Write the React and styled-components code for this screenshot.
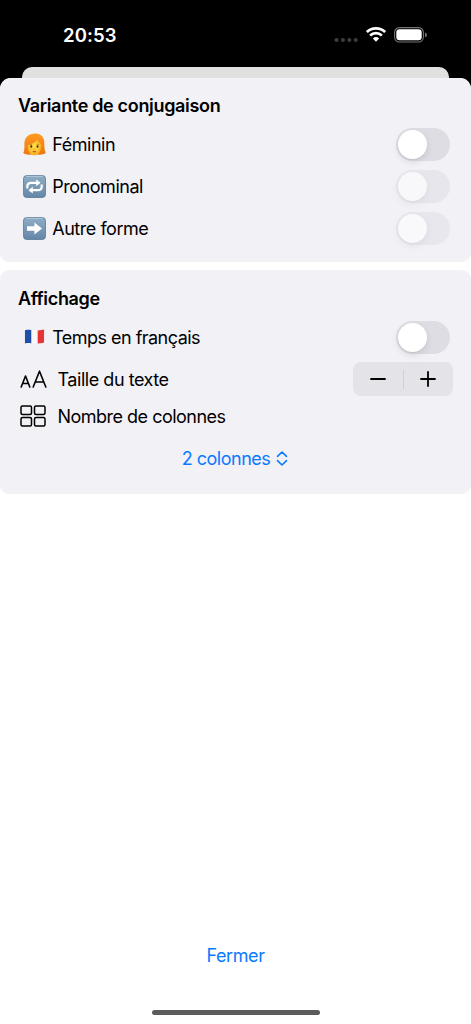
import React, { useState } from "react";
import styled, { createGlobalStyle } from "styled-components";

const GlobalStyle = createGlobalStyle`
  * {
    box-sizing: border-box;
  }

  body {
    margin: 0;
    background: #000;
    font-family: Inter, "Liberation Sans", sans-serif;
    color: #000;
  }
`;

const Screen = styled.div`
  display: flex;
  flex-direction: column;
  width: 100%;
  height: 1024px;
  overflow: hidden;
  background: #000;
`;

const StatusBar = styled.header`
  display: flex;
  align-items: center;
  justify-content: space-between;
  height: 66.5px;
  padding: 3px 44px 0 63px;
  color: #fff;
`;

const Clock = styled.span`
  font-size: 18.5px;
  font-weight: 600;
  line-height: 22px;
  letter-spacing: 0.1px;
`;

const StatusIcons = styled.div`
  display: flex;
  align-items: center;
  gap: 8px;
`;

const BackCard = styled.div`
  flex: none;
  height: 11px;
  margin: 0 22px;
  border-radius: 10px 10px 0 0;
  background: #e0e0e0;
`;

const Sheet = styled.main`
  display: flex;
  flex: 1;
  flex-direction: column;
  gap: 8px;
  border-radius: 11px 11px 0 0;
  background: #fff;
  overflow: hidden;
`;

const Panel = styled.section`
  height: ${({ $height }) => $height}px;
  padding: ${({ $top }) => $top || 17}px 18px 0;
  border-radius: 9px;
  background: #f2f1f6;
`;

const PanelTitle = styled.h2`
  height: 28.5px;
  margin: 0;
  font-size: 18px;
  font-weight: 600;
  line-height: 22px;
  letter-spacing: -0.33px;
`;

const Row = styled.div`
  display: flex;
  align-items: center;
  height: ${({ $height }) => $height || 42}px;
`;

const IconSlot = styled.span`
  display: flex;
  flex: none;
  width: ${({ $wide }) => ($wide ? 39.5 : 34.2)}px;
  padding-left: ${({ $wide }) => ($wide ? 2 : 5)}px;
`;

const Label = styled.span`
  flex: 1;
  padding-top: 2px;
  font-size: 18px;
  line-height: 24px;
  letter-spacing: ${({ $spacing }) => $spacing || -0.46}px;
  white-space: nowrap;
`;

const Track = styled.button`
  flex: none;
  width: 54px;
  height: 33px;
  margin-right: 3px;
  padding: 2px;
  border: none;
  border-radius: 17px;
  background: ${({ $on }) => ($on ? "#34c759" : "#dedde3")};
  opacity: ${({ disabled }) => (disabled ? 0.5 : 1)};
`;

const Thumb = styled.span`
  display: block;
  width: 29px;
  height: 29px;
  margin-left: ${({ $on }) => ($on ? 21 : 0)}px;
  border-radius: 50%;
  background: #fff;
  box-shadow: 0 3px 7px rgba(0, 0, 0, 0.1), 0 1px 1px rgba(0, 0, 0, 0.04);
`;

const StepperBox = styled.div`
  display: flex;
  align-items: center;
  width: 100px;
  height: 34px;
  border-radius: 8px;
  background: #e4e3e8;
`;

const StepButton = styled.button`
  display: flex;
  flex: 1;
  align-items: center;
  justify-content: center;
  height: 100%;
  padding: 0;
  border: none;
  background: none;
`;

const StepDivider = styled.span`
  width: 1px;
  height: 19px;
  background: #d0cfd5;
`;

const Picker = styled.button`
  display: flex;
  align-items: center;
  justify-content: center;
  gap: 6px;
  width: 100%;
  height: 53px;
  padding: 0 1px 0 0;
  border: none;
  background: none;
  color: #0a7aff;
  font-family: inherit;
  font-size: 18px;
  letter-spacing: -0.48px;
`;

const Footer = styled.footer`
  display: flex;
  flex-direction: column;
  align-items: center;
  margin-top: auto;
  padding-bottom: 9px;
`;

const CloseButton = styled.button`
  height: 24px;
  margin-bottom: 42px;
  padding: 0;
  border: none;
  background: none;
  color: #0a7aff;
  font-family: inherit;
  font-size: 18px;
  line-height: 24px;
  letter-spacing: -0.4px;
`;

const HomeIndicator = styled.div`
  width: 168px;
  height: 5px;
  border-radius: 3px;
  background: #5c5c5c;
`;

const SignalDots = () => (
  <svg width="24" height="22" viewBox="0 0 24 22" fill="#3c3c3c">
    <circle cx="2.5" cy="16" r="2.1" />
    <circle cx="8.9" cy="16" r="2.1" />
    <circle cx="15.3" cy="16" r="2.1" />
    <circle cx="21.7" cy="16" r="2.1" />
  </svg>
);

const Wifi = () => (
  <svg width="20" height="15" viewBox="0 0 20 15" fill="none" stroke="#fff">
    <path d="M.9 5.1a13.1 13.1 0 0 1 18.2 0" strokeWidth="2.7" />
    <path d="M4.1 8.5a8.6 8.6 0 0 1 11.8 0" strokeWidth="2.6" />
    <path d="M6.9 11.5a4.6 4.6 0 0 1 6.2 0L10 14.7Z" fill="#fff" stroke="none" />
  </svg>
);

const Battery = () => (
  <svg width="33" height="16" viewBox="0 0 33 16">
    <rect x=".6" y=".6" width="28.8" height="14.4" rx="4.8" fill="none" stroke="#747474" strokeWidth="1.1" />
    <rect x="2.3" y="2.3" width="25.4" height="11" rx="3.2" fill="#fff" />
    <path d="M31 5.5q2 .7 2 2.4T31 10.3Z" fill="#747474" />
  </svg>
);

const Woman = () => (
  <svg width="23" height="23" viewBox="0 0 23 23">
    <defs>
      <linearGradient id="hair" x1="0" y1="0" x2="0" y2="1">
        <stop offset="0" stopColor="#ff9b20" />
        <stop offset="1" stopColor="#ee7413" />
      </linearGradient>
      <radialGradient id="skin" cx=".5" cy=".45" r=".6">
        <stop offset="0" stopColor="#ffe34d" />
        <stop offset="1" stopColor="#f3a91b" />
      </radialGradient>
    </defs>
    <path
      d="M9.500.900C15.500-.9 20.500 2.500 21.200 8c.5 3.900-.4 8.200 1.600 12-2.600 1.700-5.200 1.900-7.800 1.500H8C5.400 21.900 2.600 21.700.2 20 2.200 16.200 1 12.200 1.600 8.200 2.300 4.600 5.200 1.400 9.500.900Z"
      fill="url(#hair)"
    />
    <path d="M4.600 12.200C9 11.200 12.500 9.300 14.400 6.300c.8 2.200 2 3.700 3.800 4.900.3 6.200-2.200 11.100-6.600 11.100S4.300 18 4.600 12.200Z" fill="url(#skin)" />
    <path d="M7 11.900q1-.6 2.100-.2M13.600 11.500q1.200-.7 2.200.1" fill="none" stroke="#a95c12" strokeWidth=".6" />
    <ellipse cx="8.300" cy="13.500" rx=".95" ry="1.200" fill="#4b2b12" />
    <ellipse cx="14.500" cy="13.500" rx=".95" ry="1.200" fill="#4b2b12" />
    <path d="M10.600 16h1.600" stroke="#d98414" strokeWidth=".7" />
    <path d="M9.300 18.400q2.100-.8 4.200 0-2.100 1.700-4.200 0Z" fill="#b6471f" />
  </svg>
);

const Tile = ({ id, children }) => (
  <svg width="23" height="23" viewBox="0 0 23 23">
    <defs>
      <linearGradient id={id} x1="0" y1="0" x2="0" y2="1">
        <stop offset="0" stopColor="#8fadc6" />
        <stop offset="1" stopColor="#6486a7" />
      </linearGradient>
    </defs>
    <rect x=".5" y=".5" width="22" height="22" rx="3.200" fill={`url(#${id})`} stroke="#587894" strokeWidth=".8" />
    <path d="M3 1.300h17" stroke="#bed2e1" strokeWidth=".8" />
    {children}
  </svg>
);

const RepeatTile = () => (
  <Tile id="repeatTile">
    <path
      d="M4.300 13.600V11.500q0-3.700 3.700-3.700h6M18.700 9.400V11.500q0 3.700-3.700 3.700H9"
      fill="none"
      stroke="#fff"
      strokeWidth="2.200"
    />
    <path d="M13.200 4.400 17.600 7.800 13.200 11.200ZM9.800 11.800 5.400 15.200 9.800 18.600Z" fill="#fff" />
  </Tile>
);

const ArrowTile = () => (
  <Tile id="arrowTile">
    <path d="M4 9.200h7.400V5.400L19 11.500l-7.600 6.100v-3.800H4Z" fill="#fff" />
  </Tile>
);

const Flag = () => (
  <svg width="23" height="18" viewBox="0 0 23 18">
    <defs>
      <clipPath id="flagShape">
        <path d="M1.800 2.300C5.200 1.400 8.300 1.900 11.500 2.200s6.200.3 9.700-.6v13c-3.300.9-6.500 1-9.700.7s-6.300-.8-9.700.1Z" />
      </clipPath>
    </defs>
    <g clipPath="url(#flagShape)">
      <path d="M1.800 0h6.700v18H1.800Z" fill="#1f4fa6" />
      <path d="M8.500 0h6.200v18H8.500Z" fill="#f9f9fa" />
      <path d="M14.700 0h6.500v18h-6.500Z" fill="#e53535" />
    </g>
  </svg>
);

const TextSize = () => (
  <svg width="27" height="20" viewBox="0 0 27 20" fill="none" stroke="#000" strokeWidth="1.600" strokeLinecap="round" strokeLinejoin="round">
    <path d="M1.200 18 5.500 7 9.800 18M2.600 14.500h5.800" />
    <path d="M13.200 18 19.500 2.200 25.800 18M15.300 13h8.400" />
  </svg>
);

const Grid = () => (
  <svg width="26" height="23" viewBox="0 0 26 23" fill="none" stroke="#000" strokeWidth="1.500">
    <rect x="1" y="1" width="10.500" height="8.500" rx="1.500" />
    <rect x="14.500" y="1" width="10.500" height="8.500" rx="1.500" />
    <rect x="1" y="12.500" width="10.500" height="8.500" rx="1.500" />
    <rect x="14.500" y="12.500" width="10.500" height="8.500" rx="1.500" />
  </svg>
);

const Chevrons = () => (
  <svg width="12" height="16" viewBox="0 0 12 16" fill="none" stroke="#0a7aff" strokeWidth="1.600" strokeLinecap="round" strokeLinejoin="round">
    <path d="M1.500 5.300 6 1l4.500 4.300M1.500 9.700 6 14l4.500-4.300" />
  </svg>
);

const Toggle = ({ disabled, label }) => {
  const [on, setOn] = useState(false);
  return (
    <Track role="switch" aria-checked={on} aria-label={label} disabled={disabled} $on={on} onClick={() => setOn(!on)}>
      <Thumb $on={on} />
    </Track>
  );
};

const Stepper = () => (
  <StepperBox>
    <StepButton aria-label="Réduire">
      <svg width="16" height="16" viewBox="0 0 16 16" stroke="#000" strokeWidth="1.800" strokeLinecap="round">
        <path d="M1 8h14" />
      </svg>
    </StepButton>
    <StepDivider />
    <StepButton aria-label="Agrandir">
      <svg width="16" height="16" viewBox="0 0 16 16" stroke="#000" strokeWidth="1.800" strokeLinecap="round">
        <path d="M1 8h14M8 1v14" />
      </svg>
    </StepButton>
  </StepperBox>
);

const variants = [
  { label: "Féminin", icon: <Woman /> },
  { label: "Pronominal", icon: <RepeatTile />, disabled: true },
  { label: "Autre forme", icon: <ArrowTile />, disabled: true },
];

const App = () => {
  return (
    <>
      <GlobalStyle />
      <Screen>
        <StatusBar>
          <Clock>20:53</Clock>
          <StatusIcons>
            <SignalDots />
            <Wifi />
            <Battery />
          </StatusIcons>
        </StatusBar>
        <BackCard />
        <Sheet>
          <Panel $height={184}>
            <PanelTitle>Variante de conjugaison</PanelTitle>
            {variants.map(({ label, icon, disabled }) => (
              <Row key={label}>
                <IconSlot>{icon}</IconSlot>
                <Label>{label}</Label>
                <Toggle label={label} disabled={disabled} />
              </Row>
            ))}
          </Panel>
          <Panel $height={224} $top={18}>
            <PanelTitle>Affichage</PanelTitle>
            <Row>
              <IconSlot>
                <Flag />
              </IconSlot>
              <Label $spacing={-0.53}>Temps en français</Label>
              <Toggle label="Temps en français" />
            </Row>
            <Row>
              <IconSlot $wide>
                <TextSize />
              </IconSlot>
              <Label>Taille du texte</Label>
              <Stepper />
            </Row>
            <Row $height={32}>
              <IconSlot $wide>
                <Grid />
              </IconSlot>
              <Label $spacing={-0.51}>Nombre de colonnes</Label>
            </Row>
            <Picker>
              2 colonnes
              <Chevrons />
            </Picker>
          </Panel>
          <Footer>
            <CloseButton>Fermer</CloseButton>
            <HomeIndicator />
          </Footer>
        </Sheet>
      </Screen>
    </>
  );
};

export default App;
